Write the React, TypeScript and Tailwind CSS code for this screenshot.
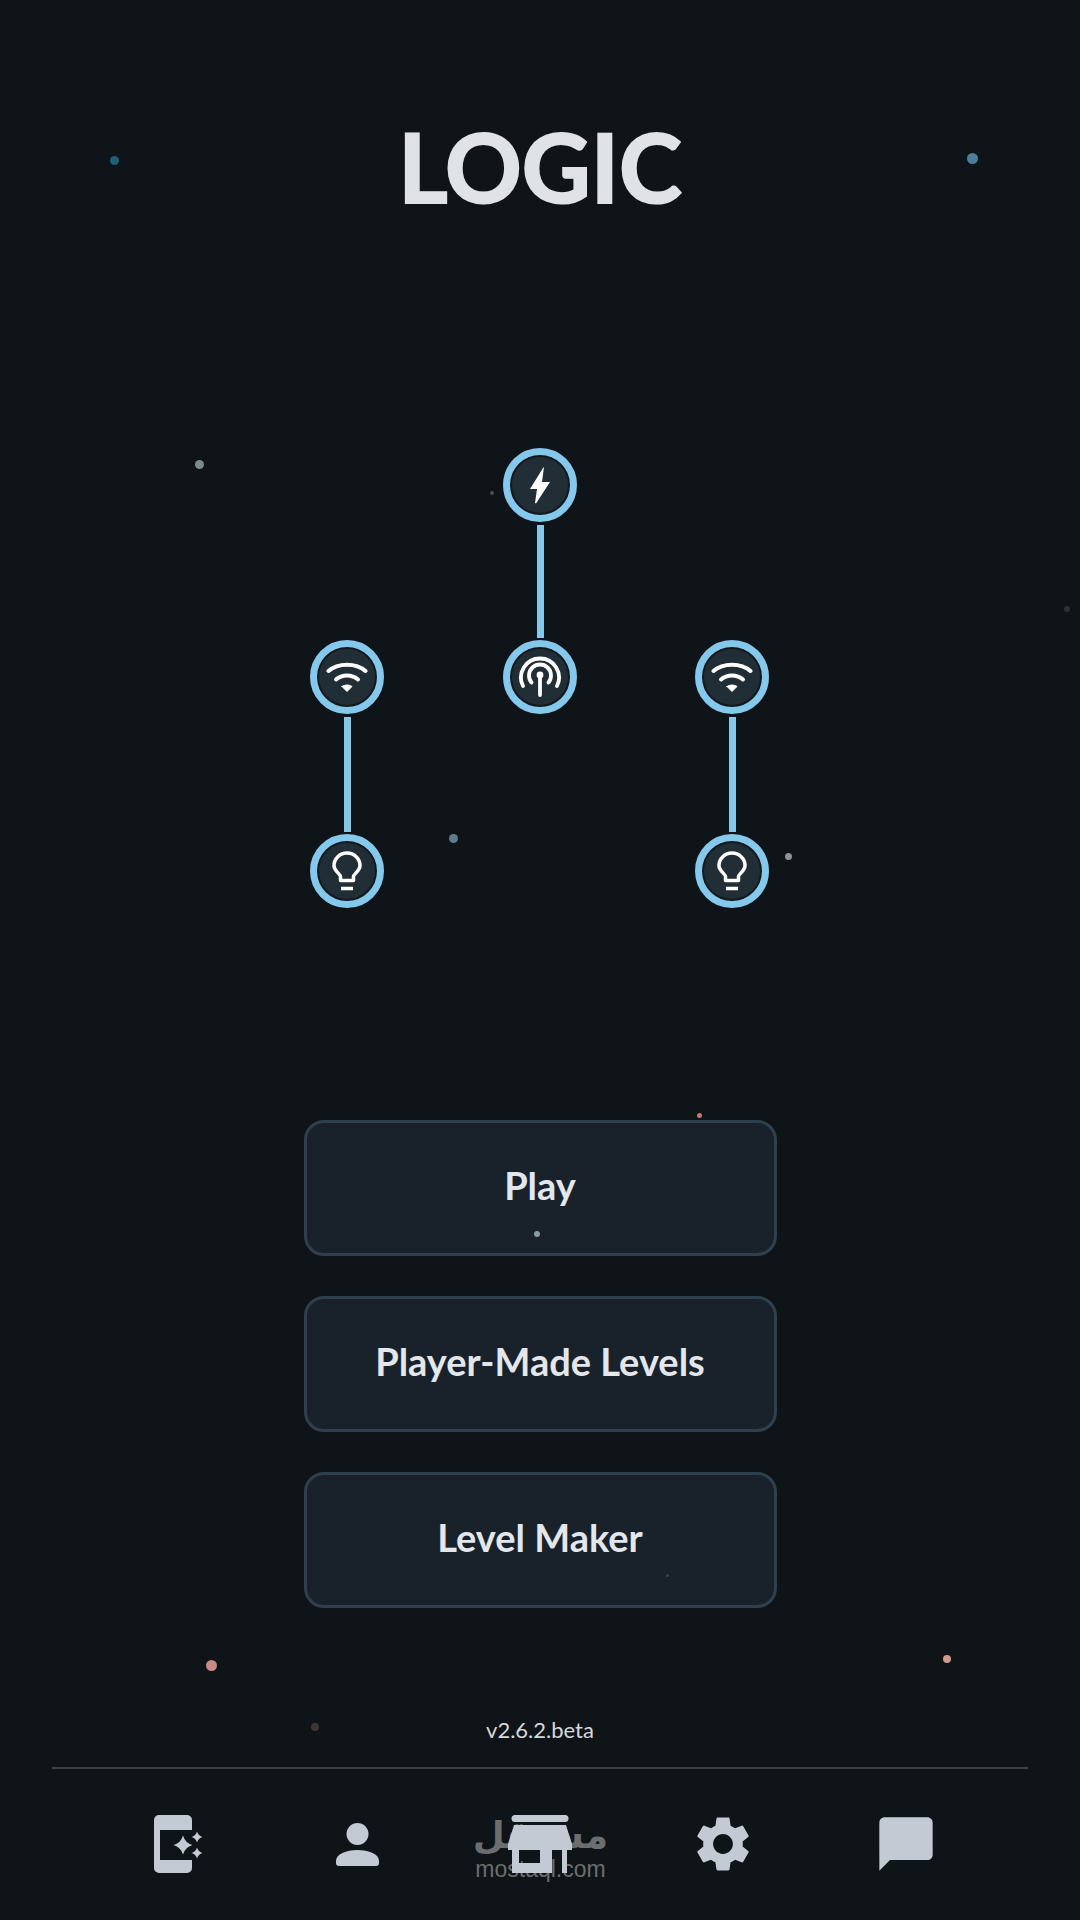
import React from "react";
import { MdSettings, MdChatBubble } from "react-icons/md";

const particles = [
  { c: "left-[110px] top-[156px] w-[9px] h-[9px] bg-[#1f5f78]" },
  { c: "left-[967px] top-[153px] w-[11px] h-[11px] bg-[#4a7f9c]" },
  { c: "left-[195px] top-[460px] w-[9px] h-[9px] bg-[#7d8a8c]" },
  { c: "left-[490px] top-[491px] w-[4px] h-[4px] bg-[#4a5254]" },
  { c: "left-[1064px] top-[606px] w-[6px] h-[6px] bg-[#2a3436]" },
  { c: "left-[449px] top-[834px] w-[9px] h-[9px] bg-[#5f7c8c]" },
  { c: "left-[785px] top-[853px] w-[7px] h-[7px] bg-[#8b9497]" },
  { c: "left-[697px] top-[1113px] w-[5px] h-[5px] bg-[#b87f76]" },
  { c: "left-[534px] top-[1231px] w-[6px] h-[6px] bg-[#8a9ba6]" },
  { c: "left-[666px] top-[1574px] w-[3px] h-[3px] bg-[#2f4a55]" },
  { c: "left-[206px] top-[1660px] w-[11px] h-[11px] bg-[#c78a84]" },
  { c: "left-[943px] top-[1655px] w-[8px] h-[8px] bg-[#d0978d]" },
  { c: "left-[311px] top-[1723px] w-[8px] h-[8px] bg-[#3f3436]" },
];

function Node({ children, cls }: { children: React.ReactNode; cls: string }) {
  return (
    <div className={`absolute w-[74px] h-[74px] rounded-full border-[7px] border-[#84c9ec] bg-[#222e36] shadow-[inset_0_0_0_2px_#121a1f] flex items-center justify-center ${cls}`}>
      {children}
    </div>
  );
}

const Bolt = () => (
  <svg width="20" height="37" viewBox="0 0 20 37" fill="#fff">
    <path d="M14 0 L13 1 L0 22 H7 L5 36 L6 36.500 L20 15 H12 Z" />
  </svg>
);

const Wifi = () => (
  <svg width="42" height="30" viewBox="0 0 42 30" fill="none" stroke="#fff" strokeWidth="4" strokeLinecap="round">
    <path d="M2.500 9 C12 0.500 30 0.500 39.500 9" />
    <path d="M10 17.500 C16 12 26 12 32 17.500" />
    <path d="M16 24.500 L21 29.500 L26 24.500 C23 22.500 19 22.500 16 24.500 Z" fill="#fff" strokeWidth="1" />
  </svg>
);

const Antenna = () => (
  <svg width="44" height="44" viewBox="0 0 44 44" fill="none" stroke="#fff" strokeWidth="3.800" strokeLinecap="round">
    <path d="M5 31 A19 19 0 1 1 39 31" />
    <path d="M13.500 27.500 A11 11 0 1 1 30.500 27.500" />
    <circle cx="22" cy="20" r="3.400" fill="#fff" stroke="none" />
    <path d="M22 21 V40" />
  </svg>
);

const Bulb = () => (
  <svg width="30" height="40" viewBox="0 0 30 40" fill="none" stroke="#fff" strokeWidth="3.500" strokeLinecap="butt" strokeLinejoin="round">
    <path d="M8.500 29.500 H21.500 V25.500 C21.500 23 28 20 28 14.500 A13 12.500 0 0 0 2 14.500 C2 20 8.500 23 8.500 25.500 Z" />
    <path d="M9 37.500 H21" />
  </svg>
);

const Btn = ({ children }: { children: React.ReactNode }) => (
  <button className="w-[473px] h-[136px] rounded-[20px] border-[3px] border-[#2e404c] bg-[#19222a] text-[#e3e7ec] text-[38px] font-bold font-['Lato',sans-serif] flex items-center justify-center pb-[6px]">
    {children}
  </button>
);

const sparkle = (x: number, y: number, r: number) => {
  const k = r * 0.22;
  return `M${x} ${y - r} Q${x + k} ${y - k} ${x + r} ${y} Q${x + k} ${y + k} ${x} ${y + r} Q${x - k} ${y + k} ${x - r} ${y} Q${x - k} ${y - k} ${x} ${y - r}Z`;
};

const Devices = () => (
  <svg width="48" height="58" viewBox="0 0 48 58" fill="#c3cad3" className="ml-[8px]">
    <path d="M5 0 H33 A5 5 0 0 1 38 5 V15 H6 V45 H38 V53 A5 5 0 0 1 33 58 H5 A5 5 0 0 1 0 53 V5 A5 5 0 0 1 5 0 Z" />
    <path d={sparkle(29, 30, 9.5)} />
    <path d={sparkle(43, 22, 5.5)} />
    <path d={sparkle(43, 38, 5.5)} />
  </svg>
);

const Person = () => (
  <svg width="43" height="43" viewBox="0 0 43 43" fill="#c3cad3">
    <circle cx="21.500" cy="11" r="11" />
    <path d="M0 38 C0 31 10 27 21.500 27 C33 27 43 31 43 38 V40 A3 3 0 0 1 40 43 H3 A3 3 0 0 1 0 40 Z" />
  </svg>
);

const Store = () => (
  <svg width="64" height="58" viewBox="0 0 64 58" fill="#c3cad3" className="relative z-10">
    <path d="M7 0 H57 A3.500 3.500 0 0 1 57 7 H7 A3.500 3.500 0 0 1 7 0 Z" />
    <path d="M6 10 H58 L64 29 V35 H0 V29 Z" />
    <path fillRule="evenodd" d="M4 34 H59 V58 H54 V34 H44 V58 H4 Z M11 35 V48 H32 V35 Z" />
  </svg>
);

export default function App() {
  return (
    <div className="relative w-[1080px] h-[1920px] overflow-hidden bg-[#0e1417] flex flex-col items-center font-['Lato',sans-serif]">
      {particles.map((p, i) => (
        <div key={i} className={`absolute rounded-full ${p.c}`} />
      ))}

      <h1 className="mt-[104px] h-[124px] leading-[124px] text-[95px] font-bold text-[#dfe3e8] [-webkit-text-stroke:2px_#dfe3e8]">LOGIC</h1>

      <div className="relative mt-[220px] w-[460px] h-[460px] shrink-0">
        <div className="absolute left-[226.500px] top-[77px] w-[7px] h-[113px] bg-[#84c9ec]" />
        <div className="absolute left-[33.500px] top-[269px] w-[7px] h-[115px] bg-[#84c9ec]" />
        <div className="absolute left-[418.500px] top-[269px] w-[7px] h-[115px] bg-[#84c9ec]" />
        <Node cls="left-[193px] top-[0px]"><Bolt /></Node>
        <Node cls="left-[0px] top-[192px]"><Wifi /></Node>
        <Node cls="left-[193px] top-[192px]"><Antenna /></Node>
        <Node cls="left-[385px] top-[192px]"><Wifi /></Node>
        <Node cls="left-[0px] top-[386px]"><Bulb /></Node>
        <Node cls="left-[385px] top-[386px]"><Bulb /></Node>
      </div>

      <div className="mt-[212px] flex flex-col items-center gap-[40px]">
        <Btn>Play</Btn>
        <Btn>Player-Made Levels</Btn>
        <Btn>Level Maker</Btn>
      </div>

      <div className="mt-[107px] text-[22px] leading-[30px] text-[#d5d9dd]">v2.6.2.beta</div>

      <div className="mt-[22px] w-[976px] h-[2px] bg-[#3a4144]" />

      <nav className="relative mt-[42px] w-[915px] h-[58px] grid grid-cols-5 items-center justify-items-center">
        <Devices />
        <Person />
        <Store />
        <MdSettings size={66} color="#c3cad3" />
        <MdChatBubble size={64} color="#c3cad3" />
        <div className="absolute left-[391px] top-[6px] w-[134px] flex flex-col items-center text-[#6a6e70]">
          <span className="text-[37px] leading-[38px] font-bold font-['DejaVu_Sans',sans-serif]">مستقل</span>
          <span className="mt-[6px] text-[23px] leading-[16px] font-['Liberation_Sans',sans-serif]">mostaql.com</span>
        </div>
      </nav>
    </div>
  );
}
